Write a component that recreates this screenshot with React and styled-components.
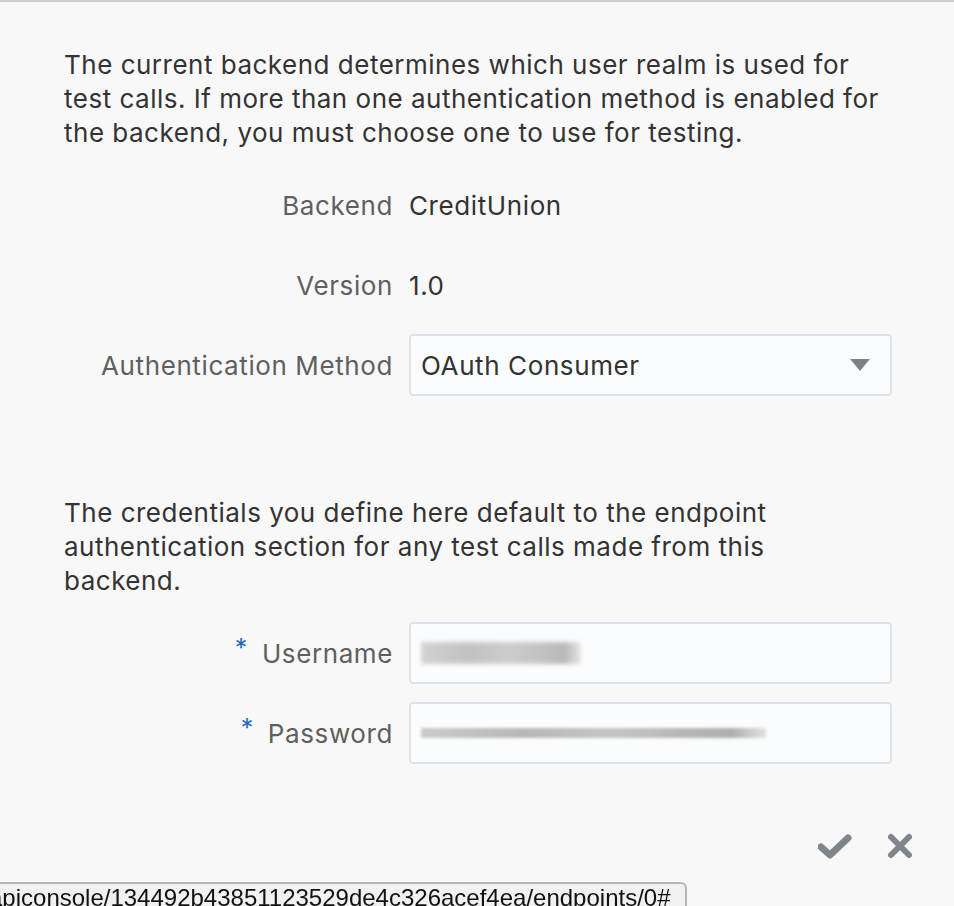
import React from 'react';
import styled, { createGlobalStyle } from 'styled-components';

const GlobalCss = createGlobalStyle`
	html,
	body {
		margin: 0;
		padding: 0;
		background: #f8f8f8;
	}

	body {
		font-family: Inter, 'Open Sans', sans-serif;
		color: #333;
		overflow: hidden;
	}
`;

const PageCss = styled.main`
	min-height: 906px;
	box-sizing: border-box;
	border-top: 2px solid #c6ced7;
	padding: 46px 40px 0 64px;
	position: relative;
`;

const TextCss = styled.p`
	margin: 0;
	width: ${({ $width }) => $width || 830}px;
	font-size: 26px;
	letter-spacing: 0.5px;
	line-height: 34px;
	color: #333;
`;

const FormCss = styled.div`
	display: grid;
	grid-template-columns: 329px 483px;
	column-gap: 16px;
	row-gap: 18px;
	margin: ${({ $top }) => $top}px 0 ${({ $bottom }) => $bottom}px;
`;

const LabelCss = styled.label`
	display: flex;
	align-items: center;
	justify-content: flex-end;
	height: 62px;
	font-size: 26px;
	letter-spacing: 0.6px;
	color: #5f5f5f;

	span {
		color: #1f6bc1;
		margin-right: 14px;
		font-size: 25px;
		position: relative;
		top: -5px;
	}
`;

const ValueCss = styled.div`
	display: flex;
	align-items: center;
	height: 62px;
	font-size: 26px;
	letter-spacing: 0.6px;
	color: #333;
`;

const FieldCss = styled.div`
	display: flex;
	align-items: center;
	justify-content: space-between;
	height: 62px;
	box-sizing: border-box;
	padding: 0 20px 0 10px;
	background: #fbfcfd;
	border: 2px solid #dfe3e7;
	border-radius: 4px;
	font-size: 26px;
	letter-spacing: 0.6px;
	color: #333;
`;

const CaretCss = styled.span`
	width: 0;
	height: 0;
	border-left: 10px solid transparent;
	border-right: 10px solid transparent;
	border-top: 12px solid #7d8185;
`;

const BlurCss = styled.div`
	height: ${({ $h }) => $h}px;
	width: ${({ $w }) => $w}px;
	background: linear-gradient(
		90deg,
		#c9c9c9,
		#b4b4b4 30%,
		#c2c2c2 55%,
		#aaaaaa 90%,
		#e2e2e2
	);
	filter: blur(${({ $blur }) => $blur}px);
	opacity: ${({ $o }) => $o};
`;

const FooterCss = styled.div`
	display: flex;
	justify-content: flex-end;
	align-items: center;
	gap: 34px;
	padding-top: 68px;
`;

const IconButtonCss = styled.button`
	border: 0;
	background: none;
	padding: 0;
	display: flex;
	color: #7f858a;
	cursor: pointer;
`;

const StatusCss = styled.div`
	position: fixed;
	left: -20px;
	bottom: -6px;
	width: 707px;
	height: 30px;
	box-sizing: border-box;
	padding: 0 0 0 7px;
	background: #f1f1f1;
	border: 2px solid #b6b6b6;
	border-radius: 0 6px 0 0;
	font-family: 'Liberation Sans', Arial, sans-serif;
	font-size: 24px;
	line-height: 28px;
	color: #111;
	white-space: nowrap;
	overflow: hidden;
`;

export default function App() {
	return (
		<>
			<GlobalCss />
			<PageCss>
				<TextCss>
					The current backend determines which user realm is used for test
					calls. If more than one authentication method is enabled for the
					backend, you must choose one to use for testing.
				</TextCss>
				<FormCss $top={24} $bottom={100}>
					<LabelCss>Backend</LabelCss>
					<ValueCss>CreditUnion</ValueCss>
					<LabelCss>Version</LabelCss>
					<ValueCss>1.0</ValueCss>
					<LabelCss>Authentication Method</LabelCss>
					<FieldCss>
						OAuth Consumer
						<CaretCss />
					</FieldCss>
				</FormCss>
				<TextCss $width={790}>
					The credentials you define here default to the endpoint
					authentication section for any test calls made from this backend.
				</TextCss>
				<FormCss $top={24} $bottom={0}>
					<LabelCss>
						<span>*</span>Username
					</LabelCss>
					<FieldCss>
						<BlurCss $w={160} $h={22} $blur={2} $o={0.8} />
					</FieldCss>
					<LabelCss>
						<span>*</span>Password
					</LabelCss>
					<FieldCss>
						<BlurCss $w={345} $h={10} $blur={1.5} $o={0.95} />
					</FieldCss>
				</FormCss>
				<FooterCss>
					<IconButtonCss aria-label="Save">
						<svg width="34" height="28" viewBox="0 0 34 28">
							<path
								d="M3 15 L12 23 L30 6"
								fill="none"
								stroke="currentColor"
								strokeWidth="7"
								strokeLinecap="round"
								strokeLinejoin="round"
							/>
						</svg>
					</IconButtonCss>
					<IconButtonCss aria-label="Cancel">
						<svg width="28" height="28" viewBox="0 0 28 28">
							<path
								d="M5 5 L23 23 M23 5 L5 23"
								fill="none"
								stroke="currentColor"
								strokeWidth="6"
								strokeLinecap="round"
							/>
						</svg>
					</IconButtonCss>
				</FooterCss>
				<StatusCss>
					apiconsole/134492b43851123529de4c326acef4ea/endpoints/0#
				</StatusCss>
			</PageCss>
		</>
	);
}
